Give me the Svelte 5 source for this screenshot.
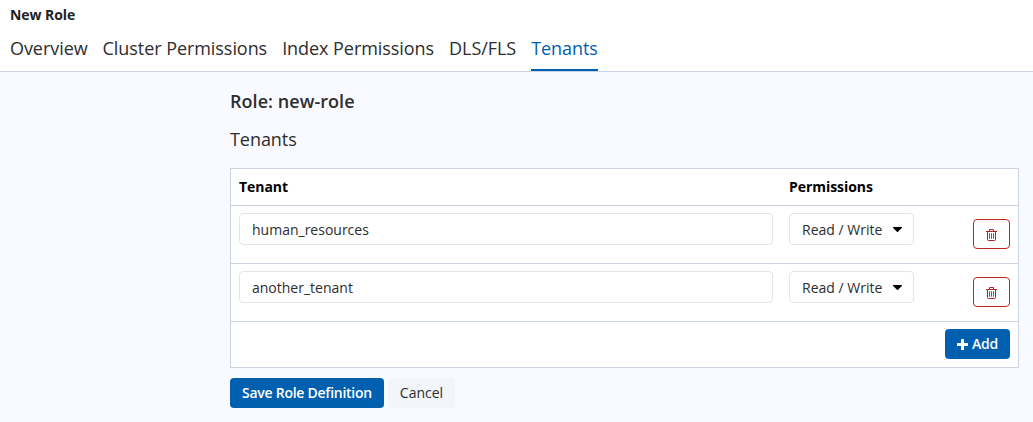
<script>
  const tabs = ['Overview', 'Cluster Permissions', 'Index Permissions', 'DLS/FLS', 'Tenants'];
  const tenants = ['human_resources', 'another_tenant'];
</script>

<div class="page">
  <header>
    <div class="crumb">New Role</div>
    <nav>
      {#each tabs as tab}
        <span class="tab" class:active={tab === 'Tenants'}><span class="label">{tab}</span></span>
      {/each}
    </nav>
  </header>
  <main>
    <h1>Role: new-role</h1>
    <h2>Tenants</h2>
    <div class="table">
      <div class="row head"><span>Tenant</span><span>Permissions</span></div>
      {#each tenants as tenant}
        <div class="row">
          <div class="field">{tenant}</div>
          <div class="field select">
            <span>Read / Write</span>
            <svg width="9" height="5" viewBox="0 0 9 5"><path d="M0 0h9v.8L4.8 5h-.6L0 .8z" /></svg>
          </div>
          <div class="actions">
            <button class="delete" aria-label="Delete">
              <svg width="11" height="12" viewBox="0 0 11 12" fill="none" stroke="currentColor">
                <path d="M0 2.5h11M3.5 2.2V.5h4v1.7M1.5 2.5v8q0 1 1 1h6q1 0 1-1v-8" />
                <path d="M3.5 4.2v5.6M5.5 4.2v5.6M7.5 4.2v5.6" stroke-width=".9" />
              </svg>
            </button>
          </div>
        </div>
      {/each}
      <div class="foot">
        <button class="primary add">
          <svg width="11" height="11" viewBox="0 0 11 11"><path d="M4.5 0h2q.5 0 .5.5V4h3.5q.5 0 .5.5v2q0 .5-.5.5H7v3.5q0 .5-.5.5h-2q-.5 0-.5-.5V7H.5Q0 7 0 6.500v-2Q0 4 .5 4H4V.5q0-.5.5-.5z" /></svg>
          <span>Add</span>
        </button>
      </div>
    </div>
    <div class="buttons">
      <button class="primary save">Save Role Definition</button>
      <button class="cancel">Cancel</button>
    </div>
  </main>
</div>

<style>
  :global(body) { background: #f9faff; }
  .page {
    height: 422px;
    font: 14px/20px "Open Sans", sans-serif;
    color: #2d2d2d;
    overflow: hidden;
  }
  .page, .page * { box-sizing: border-box; }
  header {
    height: 72px;
    padding: 5px 10px 0;
    background: #fff;
    border-bottom: 1px solid #c9d2e0;
  }
  .crumb { font-weight: 700; height: 20px; color: #222; letter-spacing: -.06px; }
  nav { display: flex; gap: 15px; margin-top: 10px; }
  .tab { height: 36px; font-size: 18px; line-height: 27px; letter-spacing: -.06px; white-space: nowrap; }
  .active { color: #005fae; border-bottom: 2px solid #005fae; }
  main { padding: 16px 14px 0 230px; }
  h1 { margin: 0; font-size: 18px; line-height: 26px; font-weight: 600; letter-spacing: .05px; }
  h2 { margin: 12px 0 16px; font-size: 18px; line-height: 26px; font-weight: 400; letter-spacing: -.06px; }
  .table { width: 789px; border: 1px solid #cad3e2; background: #fff; }
  .row {
    display: grid;
    grid-template-columns: 534px 125px 1fr;
    column-gap: 16px;
    height: 58px;
    padding: 7px 8px 0;
    border-bottom: 1px solid #cad3e2;
  }
  .head { height: 37px; padding-top: 8px; font-weight: 700; color: #000; letter-spacing: -.05px; }
  .field {
    height: 32px;
    padding: 6px 12px 4px;
    border: 1px solid #e3e5e9;
    border-radius: 4px;
    white-space: nowrap;
  }
  .select { display: flex; justify-content: space-between; padding-right: 11px; }
  .select svg { margin-top: 7px; fill: #000; }
  .actions { display: flex; justify-content: flex-end; padding-top: 6px; }
  button {
    height: 30px;
    padding: 0;
    border: 0;
    border-radius: 4px;
    font: inherit;
    display: flex;
    align-items: center;
    justify-content: center;
    white-space: nowrap;
  }
  .delete { width: 37px; border: 1px solid #bd271e; background: #fff; color: #b5251f; padding-top: 2px; }
  .foot { display: flex; justify-content: flex-end; height: 45px; padding: 7px 8px 0; }
  .primary { background: #005fae; color: #fff; font-weight: 600; letter-spacing: -.26px; }
  .add { width: 65px; gap: 4px; }
  .add svg { fill: #fff; }
  .buttons { display: flex; gap: 4px; margin-top: 10px; }
  .save { width: 154px; }
  .cancel { width: 67px; background: #f2f5f9; color: #2d2d2d; }
</style>
